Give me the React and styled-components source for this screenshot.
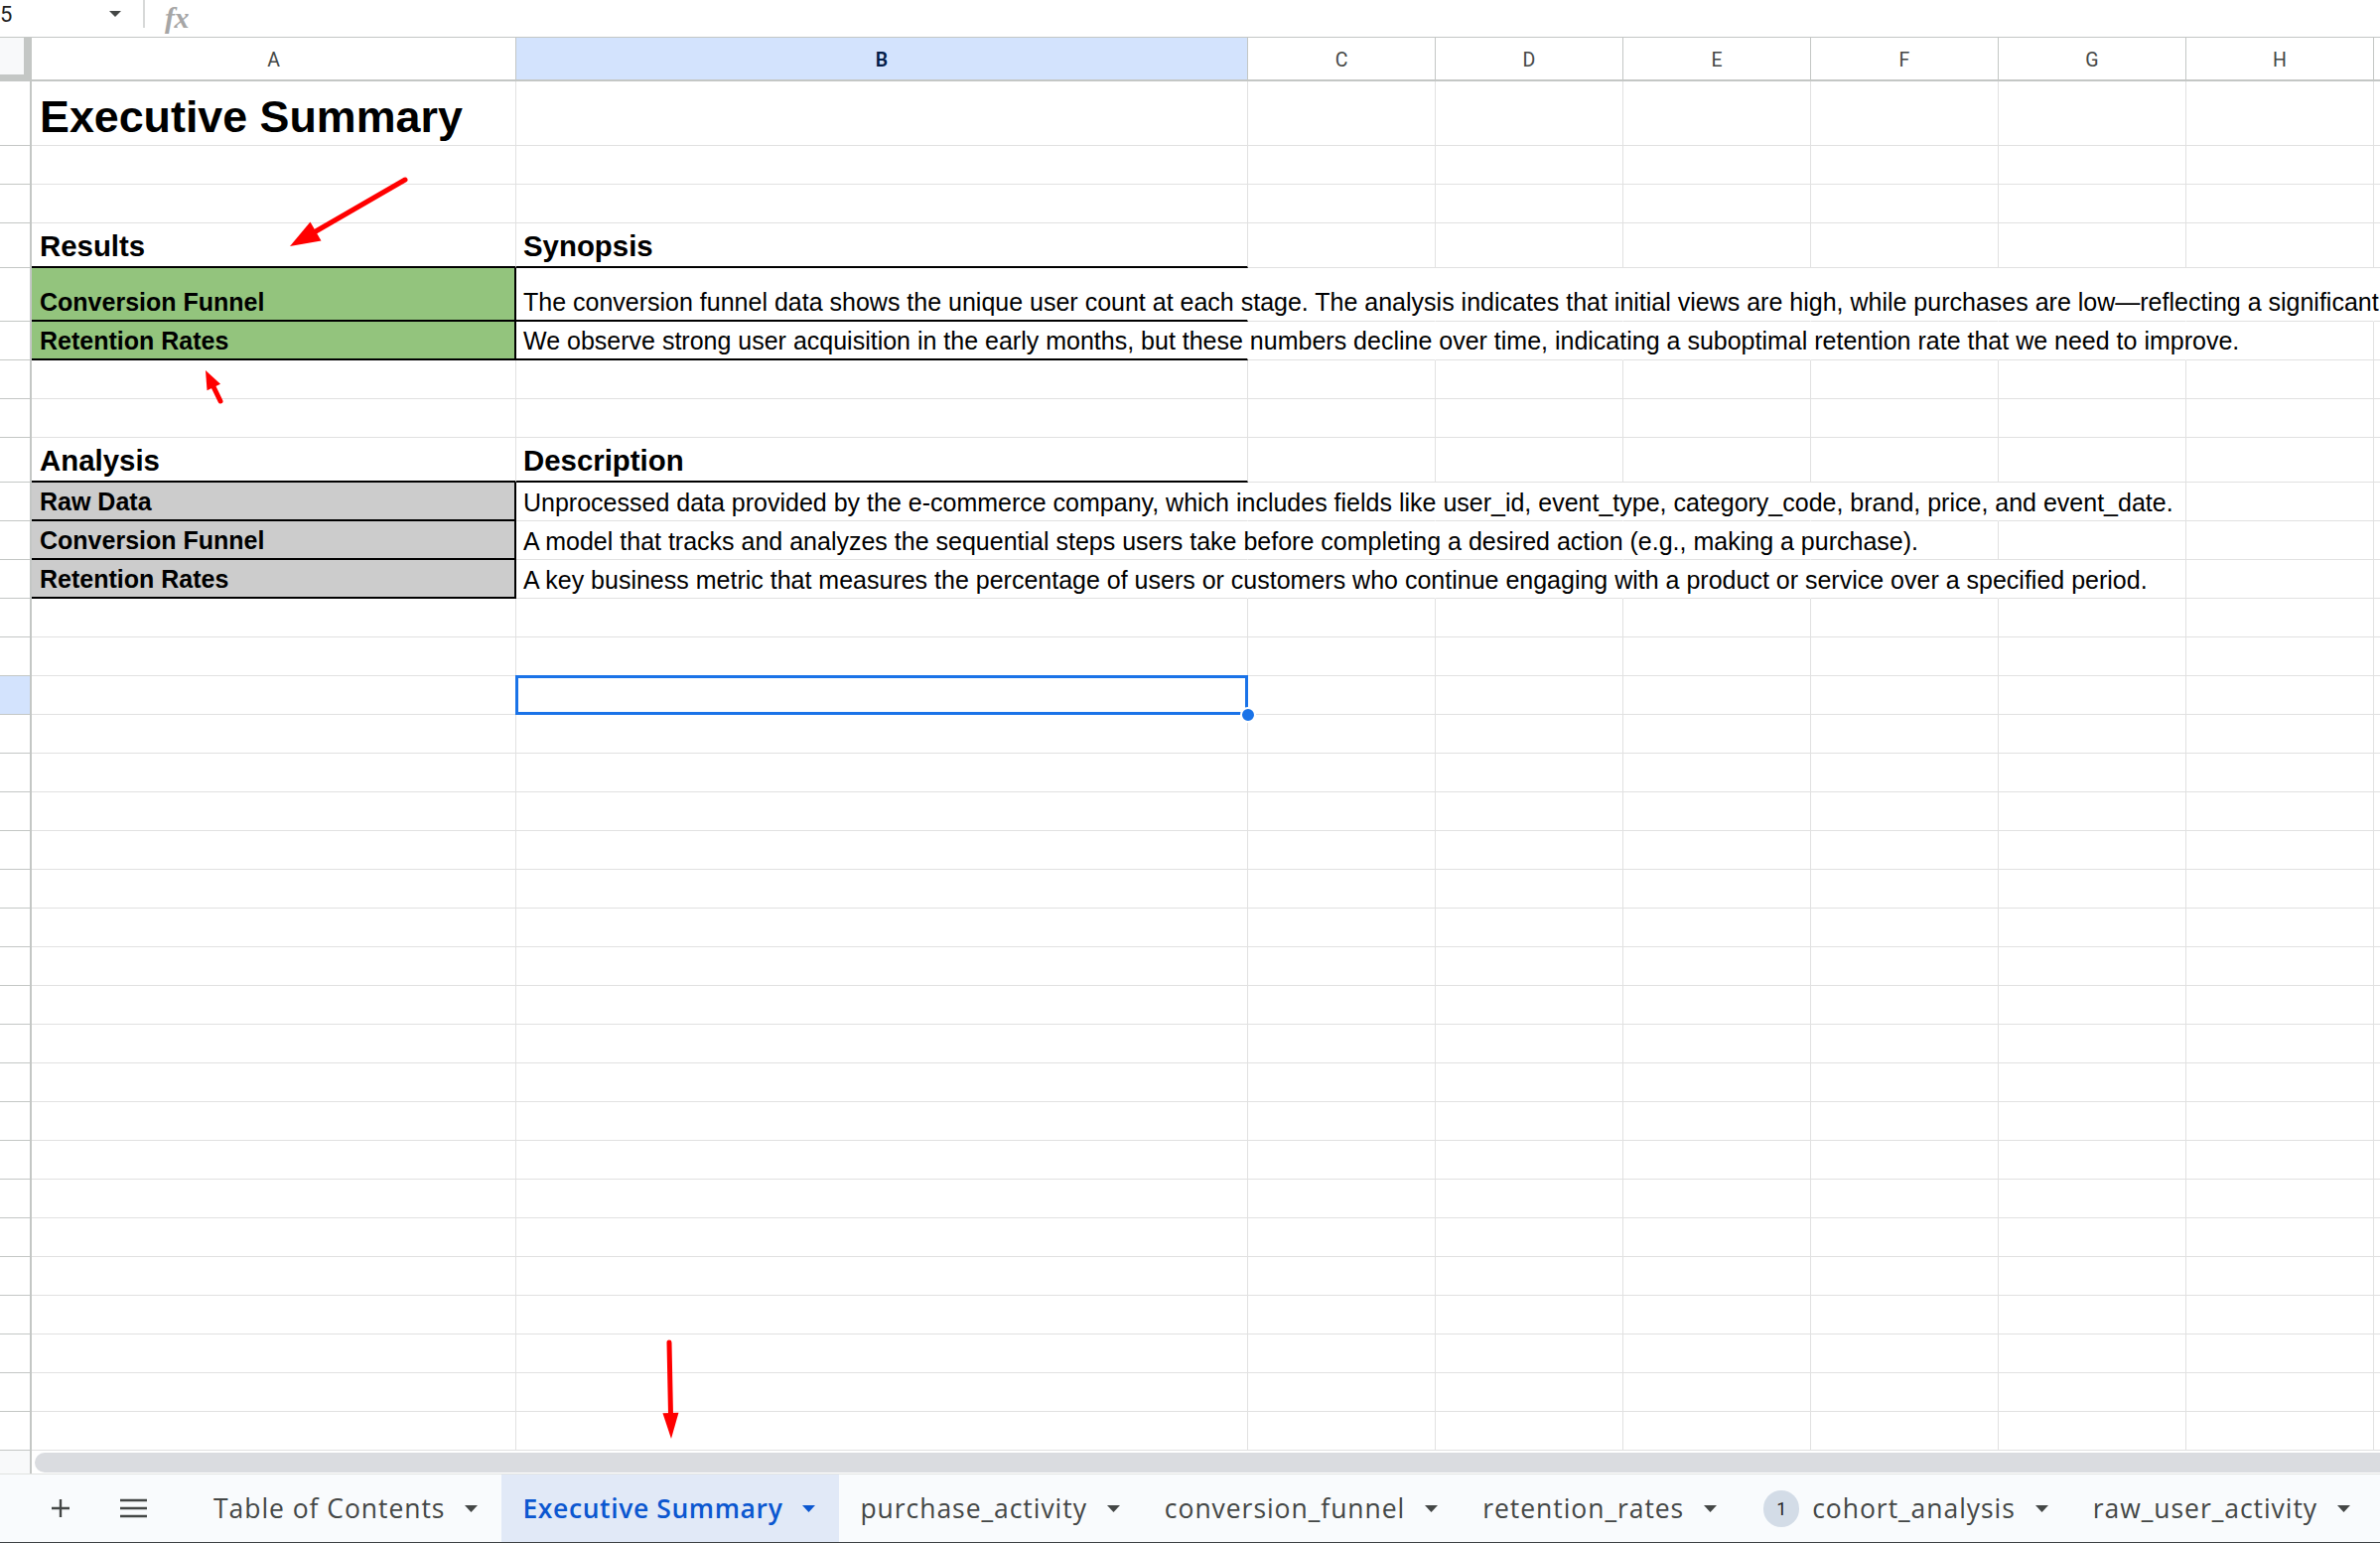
import React from 'react'
import styled, { createGlobalStyle } from 'styled-components'

const GlobalStyle = createGlobalStyle`
  html, body {
    margin: 0;
    padding: 0;
    background: #fff;
  }
  body {
    overflow: hidden;
    font-family: "Liberation Sans", Arial, sans-serif;
  }
`

const Page = styled.div`
  position: relative;
  width: 2397px;
  height: 1554px;
  overflow: hidden;
  display: flex;
  flex-direction: column;
  background: #fff;
`

/* ---------- formula bar ---------- */

const FormulaBar = styled.div`
  height: 38px;
  flex-shrink: 0;
  box-sizing: border-box;
  border-bottom: 1px solid #c4c7c5;
  display: flex;
  align-items: flex-start;
  font-family: Roboto, "Liberation Sans", sans-serif;
`

const NameBox = styled.div`
  width: 144px;
  height: 28px;
  display: flex;
  align-items: center;
  justify-content: space-between;
  padding-right: 22px;
  box-sizing: border-box;
  font-size: 22px;
  color: #1f1f1f;
`

const Divider = styled.div`
  width: 2px;
  height: 28px;
  background: #d7d9d8;
`

const Fx = styled.span`
  margin: 0 0 0 20px;
  font-family: "Liberation Serif", serif;
  font-style: italic;
  font-weight: 700;
  font-size: 30px;
  line-height: 35px;
  color: #a6a6a6;
  letter-spacing: -0.5px;
`

/* ---------- grid ---------- */

const Grid = styled.div`
  display: grid;
  grid-template-columns: 32px 488px 737px repeat(6, 189px) 1fr;
  grid-template-rows: ${p => p.$rows};
  flex-shrink: 0;
`

const Corner = styled.div`
  box-sizing: border-box;
  background: #c4c7c5;
  padding: 0 8px 7px 0;
  & > div {
    width: 100%;
    height: 100%;
    background: #f8f9fa;
  }
`

const ColHead = styled.div`
  box-sizing: border-box;
  display: flex;
  align-items: center;
  justify-content: center;
  padding-top: 2px;
  border-right: 1px solid #c4c7c5;
  border-bottom: 2px solid #c4c7c5;
  background: ${p => (p.$active ? '#d3e3fd' : '#fff')};
  color: ${p => (p.$active ? '#041e49' : '#444746')};
  font-family: Roboto, "Liberation Sans", sans-serif;
  font-weight: ${p => (p.$active ? 600 : 400)};
  font-size: 19.5px;
`

const RowHead = styled.div`
  box-sizing: border-box;
  border-right: 2px solid #c4c7c5;
  border-bottom: 1px solid #c4c7c5;
  background: ${p => (p.$active ? '#d3e3fd' : '#fff')};
`

const lineFor = v => {
  if (v === 'black') return '2px solid #000'
  if (v === 'none') return '1px solid transparent'
  return '1px solid #e1e1e1'
}

const Cell = styled.div`
  position: relative;
  box-sizing: border-box;
  display: flex;
  align-items: flex-end;
  min-width: 0;
  padding: 0 7px 3px 8px;
  white-space: nowrap;
  overflow: ${p => (p.$overflow || p.$selected ? 'visible' : 'hidden')};
  z-index: ${p => (p.$overflow || p.$selected ? 2 : 'auto')};
  background: ${p => p.$fill || 'transparent'};
  border-right: ${p => lineFor(p.$right)};
  border-bottom: ${p => lineFor(p.$bottom)};
  font-size: ${p => p.$size || 25}px;
  font-weight: ${p => (p.$bold ? 700 : 400)};
  line-height: normal;
  color: #000;

  ${p =>
    p.$selected &&
    `
    &::after {
      content: '';
      position: absolute;
      left: -1px;
      top: -1px;
      right: -1px;
      bottom: -1px;
      border: 3px solid #1a73e8;
      pointer-events: none;
    }
    &::before {
      content: '';
      position: absolute;
      right: -9px;
      bottom: -9px;
      width: 12px;
      height: 12px;
      border-radius: 50%;
      background: #1a73e8;
      border: 2px solid #fff;
      z-index: 3;
    }
  `}
`

/* ---------- scroll + tabs ---------- */

const ScrollRow = styled.div`
  height: 23px;
  flex-shrink: 0;
  display: flex;
  box-sizing: border-box;
  background: #fff;
`

const ScrollGutter = styled.div`
  width: 32px;
  box-sizing: border-box;
  border-right: 2px solid #c4c7c5;
  background: #f8f9fa;
`

const ScrollThumb = styled.div`
  flex: 1;
  margin: 2px 0 1px 3px;
  border-radius: 10px 0 0 10px;
  background: #dadce0;
`

const TabBar = styled.div`
  flex: 1;
  display: flex;
  align-items: stretch;
  box-sizing: border-box;
  background: #f9fbfd;
  border-top: 1px solid #e1e3e1;
  border-bottom: 1px solid #3c4043;
  font-family: "Open Sans", Roboto, sans-serif;
  font-size: 26.5px;
  color: #444746;
  padding-left: 41px;
`

const IconSlot = styled.div`
  width: 40px;
  display: flex;
  align-items: center;
  justify-content: center;
  margin-right: ${p => p.$gap || 0}px;
`

const Tab = styled.div`
  display: flex;
  align-items: center;
  padding: 0 24px 0 ${p => (p.$badge ? 23 : 21)}px;
  background: ${p => (p.$active ? '#e1e9f7' : 'transparent')};
  color: ${p => (p.$active ? '#0b57d0' : '#444746')};
  font-weight: ${p => (p.$active ? 600 : 400)};
  white-space: nowrap;
`

const TabLabel = styled.span`
  margin-right: 20px;
  letter-spacing: ${p => (p.$active ? 0.6 : 0.95)}px;
`

const Badge = styled.span`
  width: 36px;
  height: 37px;
  margin-right: 13px;
  border-radius: 18px;
  background: #d3dce7;
  display: flex;
  align-items: center;
  justify-content: center;
  font-family: Roboto, sans-serif;
  font-size: 18px;
  color: #1f1f1f;
`

const Overlay = styled.svg`
  position: absolute;
  left: 0;
  top: 0;
  pointer-events: none;
  z-index: 10;
`

/* ---------- data ---------- */

const COLS = ['A', 'B', 'C', 'D', 'E', 'F', 'G', 'H', 'I']

const big = { size: 29.4, bold: true, bottom: 'black' }

const ROWS = [
  { h: 65, cells: { 0: { text: 'Executive Summary', size: 44.8, bold: true } } },
  { h: 39 },
  { h: 39 },
  { h: 45, cells: { 0: { text: 'Results', ...big }, 1: { text: 'Synopsis', ...big } } },
  {
    h: 54,
    cover: 8,
    cells: {
      0: { text: 'Conversion Funnel', bold: true, fill: '#93c47d', bottom: 'black', right: 'black' },
      1: {
        text: 'The conversion funnel data shows the unique user count at each stage. The analysis indicates that initial views are high, while purchases are low\u2014reflecting a significant',
        bottom: 'black',
      },
    },
  },
  {
    h: 39,
    cover: 7,
    cells: {
      0: { text: 'Retention Rates', bold: true, fill: '#93c47d', bottom: 'black', right: 'black' },
      1: {
        text: 'We observe strong user acquisition in the early months, but these numbers decline over time, indicating a suboptimal retention rate that we need to improve.',
        bottom: 'black',
      },
    },
  },
  { h: 39 },
  { h: 39 },
  { h: 45, cells: { 0: { text: 'Analysis', ...big }, 1: { text: 'Description', ...big } } },
  {
    h: 39,
    cover: 6,
    cells: {
      0: { text: 'Raw Data', bold: true, fill: '#cccccc', bottom: 'black', right: 'black' },
      1: {
        text: 'Unprocessed data provided by the e-commerce company, which includes fields like user_id, event_type, category_code, brand, price, and event_date.',
      },
    },
  },
  {
    h: 39,
    cover: 5,
    cells: {
      0: { text: 'Conversion Funnel', bold: true, fill: '#cccccc', bottom: 'black', right: 'black' },
      1: {
        text: 'A model that tracks and analyzes the sequential steps users take before completing a desired action (e.g., making a purchase).',
      },
    },
  },
  {
    h: 39,
    cover: 6,
    cells: {
      0: { text: 'Retention Rates', bold: true, fill: '#cccccc', bottom: 'black', right: 'black' },
      1: {
        text: 'A key business metric that measures the percentage of users or customers who continue engaging with a product or service over a specified period.',
      },
    },
  },
  { h: 39 },
  { h: 39 },
  { h: 39, selected: 1 },
  ...Array.from({ length: 19 }, () => ({ h: 39 })),
]

const TABS = [
  { name: 'Table of Contents' },
  { name: 'Executive Summary', active: true },
  { name: 'purchase_activity' },
  { name: 'conversion_funnel' },
  { name: 'retention_rates' },
  { name: 'cohort_analysis', badge: '1' },
  { name: 'raw_user_activity' },
]

const ARROWS = [
  { x1: 408, y1: 181, x2: 292, y2: 248, L: 30, W: 22 },
  { x1: 222, y1: 404, x2: 207, y2: 373, L: 19, W: 15 },
  { x1: 674, y1: 1352, x2: 676, y2: 1449, L: 26, W: 16 },
]

/* ---------- parts ---------- */

function Caret({ color = '#444746' }) {
  return (
    <svg width="13" height="7" viewBox="0 0 13 7">
      <polygon points="0,0 13,0 6.5,7" fill={color} />
    </svg>
  )
}

function Arrow({ x1, y1, x2, y2, L, W }) {
  const len = Math.hypot(x2 - x1, y2 - y1)
  const dx = (x2 - x1) / len
  const dy = (y2 - y1) / len
  const bx = x2 - dx * L
  const by = y2 - dy * L
  const nx = -dy * (W / 2)
  const ny = dx * (W / 2)
  return (
    <g>
      <line x1={x1} y1={y1} x2={bx + dx * 4} y2={by + dy * 4} stroke="#ff0000" strokeWidth="5" strokeLinecap="round" />
      <polygon points={`${x2},${y2} ${bx + nx},${by + ny} ${bx - nx},${by - ny}`} fill="#ff0000" />
    </g>
  )
}

function SheetRow({ row, index }) {
  const cover = row.cover || 0
  return (
    <>
      <RowHead $active={index === 14} />
      {COLS.map((c, ci) => {
        const cell = (row.cells && row.cells[ci]) || {}
        const covered = cover > 0 && ci >= 1 && ci < cover
        return (
          <Cell
            key={c}
            $fill={cell.fill}
            $bold={cell.bold}
            $size={cell.size}
            $bottom={cell.bottom}
            $right={cell.right || (covered ? 'none' : undefined)}
            $overflow={ci === 1 && cover > 0}
            $selected={row.selected === ci}
            style={ci === 1 ? { paddingLeft: 7 } : undefined}
          >
            {cell.text}
          </Cell>
        )
      })}
    </>
  )
}

export default function App() {
  const rowTemplate = ['44px', ...ROWS.map(r => `${r.h}px`)].join(' ')
  return (
    <Page>
      <GlobalStyle />
      <FormulaBar>
        <NameBox>
          <span>5</span>
          <svg width="12" height="6" viewBox="0 0 12 6">
            <polygon points="0,0 12,0 6,6" fill="#444746" />
          </svg>
        </NameBox>
        <Divider />
        <Fx>fx</Fx>
      </FormulaBar>

      <Grid $rows={rowTemplate}>
        <Corner>
          <div />
        </Corner>
        {COLS.map(c => (
          <ColHead key={c} $active={c === 'B'}>
            {c === 'I' ? '' : c}
          </ColHead>
        ))}
        {ROWS.map((row, i) => (
          <SheetRow key={i} row={row} index={i} />
        ))}
      </Grid>

      <ScrollRow>
        <ScrollGutter />
        <ScrollThumb />
      </ScrollRow>

      <TabBar>
        <IconSlot $gap={33}>
          <svg width="20" height="20" viewBox="0 0 20 20">
            <path d="M10 1v18M1 10h18" stroke="#444746" strokeWidth="2.4" />
          </svg>
        </IconSlot>
        <IconSlot $gap={40}>
          <svg width="27" height="20" viewBox="0 0 27 20">
            <path d="M0 2h27M0 10h27M0 18h27" stroke="#444746" strokeWidth="2.6" />
          </svg>
        </IconSlot>
        {TABS.map(t => (
          <Tab key={t.name} $active={t.active} $badge={!!t.badge}>
            {t.badge && <Badge>{t.badge}</Badge>}
            <TabLabel $active={t.active}>{t.name}</TabLabel>
            <Caret color={t.active ? '#0b57d0' : '#444746'} />
          </Tab>
        ))}
      </TabBar>

      <Overlay width="2397" height="1554" viewBox="0 0 2397 1554">
        {ARROWS.map((a, i) => (
          <Arrow key={i} {...a} />
        ))}
      </Overlay>
    </Page>
  )
}
